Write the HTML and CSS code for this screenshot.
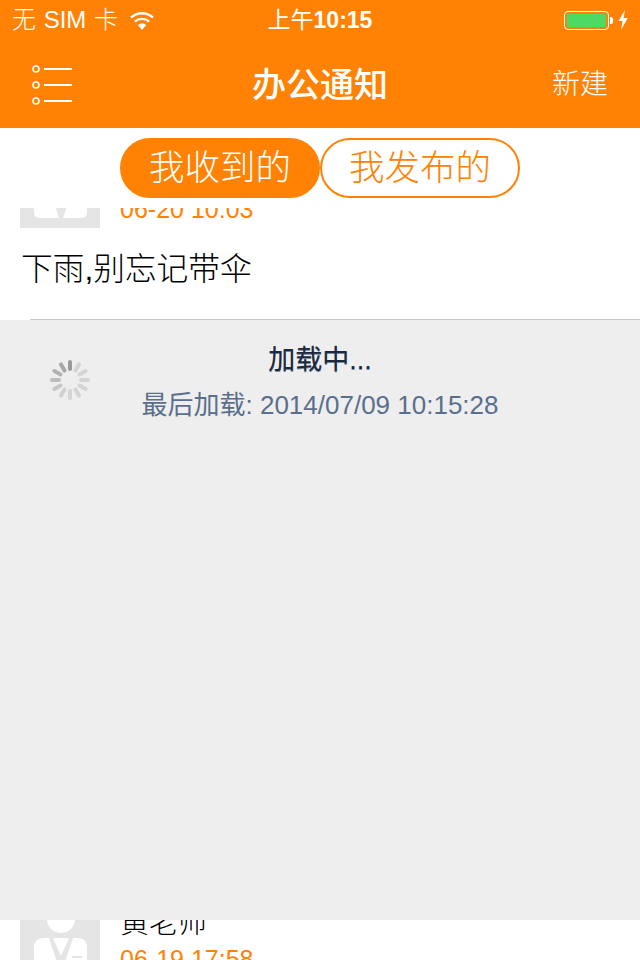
FILE: index.html
```html
<!DOCTYPE html>
<html lang="zh">
<head>
<meta charset="utf-8">
<title>办公通知</title>
<link rel="stylesheet" href="styles.css">
</head>
<body>
<div class="app">
  <header class="top">
    <div class="status">
      <div class="status-left">
        <span class="carrier">无 SIM 卡</span>
        <svg class="wifi" width="26" height="18" viewBox="0 0 26 18"><path d="M13 18 L8.8 13 A6.5 6.5 0 0 1 17.2 13 Z" fill="#fff"/><path d="M5.8 9.6 A10.8 10.8 0 0 1 20.2 9.6" fill="none" stroke="#fff" stroke-width="2.4"/><path d="M2 5.6 A16 16 0 0 1 24 5.6" fill="none" stroke="#fff" stroke-width="2.4"/></svg>
      </div>
      <span class="clock">上午<span class="clock-digits">10:15</span></span>
      <div class="status-right">
        <span class="battery"><span class="battery-fill"></span></span>
        <span class="battery-tip"></span>
        <svg class="bolt" width="10" height="20" viewBox="0 0 10 20"><path d="M7 0 L0.5 11 H4.5 L3 20 L9.8 8 H5.6 Z" fill="#fff"/></svg>
      </div>
    </div>
    <nav class="nav">
      <svg class="menu" width="42" height="40" viewBox="0 0 42 40">
        <g fill="none" stroke="#fff" stroke-width="1.6"><circle cx="5" cy="4" r="3"/><circle cx="5" cy="20" r="3"/><circle cx="5" cy="36" r="3"/></g>
        <g stroke="#fff" stroke-width="2"><path d="M13 4 H41"/><path d="M13 20 H41"/><path d="M13 36 H41"/></g>
      </svg>
      <h1 class="title">办公通知</h1>
      <span class="action">新建</span>
    </nav>
  </header>
  <div class="tabs">
    <span class="tab tab-active">我收到的</span>
    <span class="tab tab-idle">我发布的</span>
  </div>
  <div class="pane pane-upper">
    <article class="item item-first">
      <svg class="avatar" width="80" height="80" viewBox="0 0 80 80"><rect width="80" height="80" fill="#e5e5e5"/><circle cx="41" cy="21" r="14" fill="#fff"/><path d="M14 50 Q14 40 24 40 L58 40 Q67 40 67 50 L67 64 Q67 70 61 70 L20 70 Q14 70 14 64 Z" fill="#fff"/><path d="M29 40 L39 70 L43 70 L53 40 L49 40 L41 58 L33 40 Z" fill="#e5e5e5"/><rect x="52" y="58" width="10" height="2" fill="#e5e5e5"/></svg>
      <div class="meta">
        <div class="name">黄老师</div>
        <div class="date">06-20 10:03</div>
      </div>
      <p class="message">下雨,别忘记带伞</p>
    </article>
    <div class="rule"></div>
  </div>
  <section class="refresh">
    <svg class="spinner" width="40" height="40" viewBox="0 0 40 40">
      <g stroke-width="4" stroke-linecap="round">
        <path d="M20 2 V9" stroke="#9a9a9a"/>
        <path d="M29 4.4 L25.5 10.5" stroke="#d4d4d4"/>
        <path d="M35.6 11 L29.5 14.5" stroke="#d4d4d4"/>
        <path d="M38 20 H31" stroke="#d4d4d4"/>
        <path d="M35.6 29 L29.5 25.5" stroke="#d4d4d4"/>
        <path d="M29 35.6 L25.5 29.5" stroke="#d4d4d4"/>
        <path d="M20 38 V31" stroke="#d4d4d4"/>
        <path d="M11 35.6 L14.5 29.5" stroke="#d0d0d0"/>
        <path d="M4.4 29 L10.5 25.5" stroke="#c6c6c6"/>
        <path d="M2 20 H9" stroke="#bcbcbc"/>
        <path d="M4.4 11 L10.5 14.5" stroke="#b2b2b2"/>
        <path d="M11 4.4 L14.5 10.5" stroke="#a6a6a6"/>
      </g>
    </svg>
    <div class="refresh-text">
      <div class="refresh-state">加载中...</div>
      <div class="refresh-time">最后加载: 2014/07/09 10:15:28</div>
    </div>
  </section>
  <div class="pane pane-lower">
    <article class="item item-second">
      <svg class="avatar" width="80" height="80" viewBox="0 0 80 80"><rect width="80" height="80" fill="#e5e5e5"/><circle cx="41" cy="21" r="14" fill="#fff"/><path d="M14 50 Q14 40 24 40 L58 40 Q67 40 67 50 L67 64 Q67 70 61 70 L20 70 Q14 70 14 64 Z" fill="#fff"/><path d="M29 40 L39 70 L43 70 L53 40 L49 40 L41 58 L33 40 Z" fill="#e5e5e5"/><rect x="52" y="58" width="10" height="2" fill="#e5e5e5"/></svg>
      <div class="meta">
        <div class="name">黄老师</div>
        <div class="date">06-19 17:58</div>
      </div>
    </article>
  </div>
</div>
</body>
</html>
```
FILE: styles.css
```css
* { box-sizing: border-box; }
html, body { margin: 0; padding: 0; background: #fff; }
body { font-family: "Liberation Sans", "Noto Sans CJK SC", sans-serif; }
.app { width: 640px; height: 960px; overflow: hidden; display: flex; flex-direction: column; }

.top { background: #ff8204; color: #fff; }
.status { height: 40px; display: grid; grid-template-columns: 1fr auto 1fr; align-items: center; padding: 0 12px; }
.status-left { display: flex; align-items: center; gap: 11px; }
.carrier { font-size: 24px; line-height: 40px; font-weight: 300; word-spacing: 1px; }
.wifi { display: block; margin-top: 1px; }
.clock { font-size: 23px; line-height: 40px; font-weight: 400; }
.clock-digits { font-weight: 700; }
.status-right { display: flex; align-items: center; justify-content: flex-end; }
.battery { width: 45px; height: 19px; border: 1px solid #fff; border-radius: 4px; padding: 2px; display: flex; margin-top: 1px; }
.battery-fill { flex: 1; background: #4cd964; border-radius: 1px; }
.battery-tip { width: 3px; height: 7px; background: #fff; border-radius: 0 2px 2px 0; margin-left: 1px; }
.bolt { display: block; margin-left: 5px; }

.nav { height: 88px; display: grid; grid-template-columns: 1fr auto 1fr; align-items: center; padding: 0 31px; }
.menu { display: block; }
.title { margin: 0; font-size: 34px; line-height: 90px; font-weight: 500; }
.action { justify-self: end; font-size: 28px; line-height: 34px; margin: -1px 1px 0 0; font-weight: 300; }

.tabs { height: 80px; padding-top: 10px; display: flex; justify-content: center; background: #fff; }
.tab { width: 200px; height: 60px; border-radius: 30px; font-size: 35.5px; line-height: 56px; text-align: center; font-weight: 300; border: 2px solid #ff8204; }
.tab-active { background: #ff8204; color: #fff; }
.tab-idle { background: #fff; color: #ff8204; }

.pane { overflow: hidden; background: #fff; }
.pane-upper { height: 112px; }
.pane-lower { height: 40px; }
.item { display: grid; grid-template-columns: 80px 1fr; column-gap: 20px; padding-left: 20px; align-content: start; }
.item-first { margin-top: -60px; height: 171px; }
.item-second { margin-top: -22px; }
.avatar { display: block; }
.name { font-size: 29px; line-height: 36px; padding-top: 7px; color: #000; font-weight: 300; }
.date { font-size: 25px; line-height: 30px; color: #ff8204; margin-top: 3px; }
.message { grid-column: 1 / -1; margin: 21px 0 0 1px; font-size: 31.7px; line-height: 40px; color: #000; font-weight: 300; }
.rule { height: 1px; margin-left: 30px; background: #c8c8c8; }

.refresh { height: 600px; background: #eee; display: grid; grid-template-columns: 1fr auto 1fr; align-items: start; padding-top: 20px; }
.spinner { display: block; margin: 20px 0 0 50px; }
.refresh-text { text-align: center; }
.refresh-state { font-size: 27px; line-height: 40px; color: #1e2a3c; text-shadow: 0 1px 0 #6f88a8; font-weight: 400; }
.refresh-time { font-size: 26px; line-height: 36px; color: #5a6f8c; margin-top: 7px; }
```
